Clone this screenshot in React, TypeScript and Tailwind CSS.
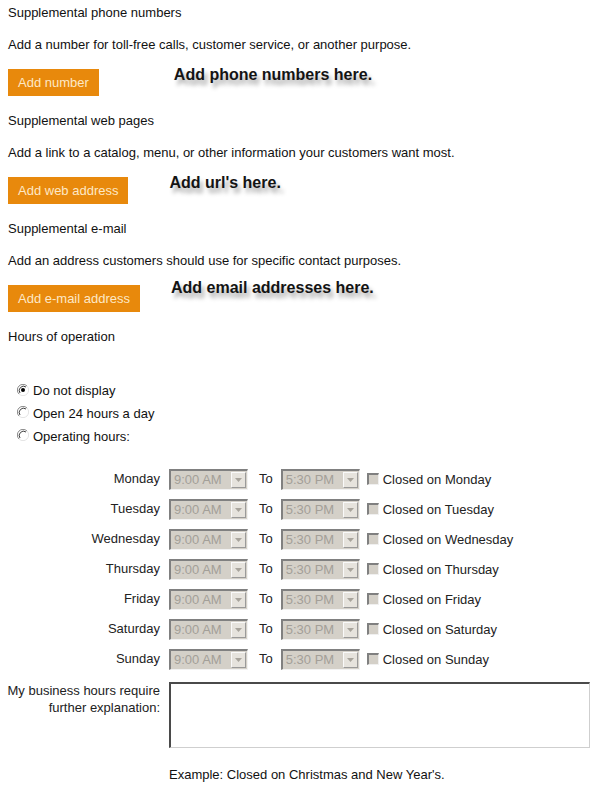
import React from "react";

const font = { fontFamily: '"Liberation Sans", Arial, sans-serif' };

const sections = [
  {
    title: "Supplemental phone numbers",
    desc: "Add a number for toll-free calls, customer service, or another purpose.",
    button: "Add number",
    note: "Add phone numbers here.",
    noteClass: "ml-[75px] -mt-[3px]",
  },
  {
    title: "Supplemental web pages",
    desc: "Add a link to a catalog, menu, or other information your customers want most.",
    button: "Add web address",
    note: "Add url's here.",
    noteClass: "ml-[41px] -mt-[3px]",
  },
  {
    title: "Supplemental e-mail",
    desc: "Add an address customers should use for specific contact purposes.",
    button: "Add e-mail address",
    note: "Add email addresses here.",
    noteClass: "ml-[31px] -mt-[6px]",
  },
];

const days = ["Monday", "Tuesday", "Wednesday", "Thursday", "Friday", "Saturday", "Sunday"];

function Radio({ checked }: { checked?: boolean }) {
  return (
    <svg width="12" height="12" viewBox="0 0 12 12" className="shrink-0 -mt-[3px]">
      <circle cx="6" cy="6" r="5.5" fill="#fff" />
      <path d="M10 2 A5.5 5.5 0 0 0 2 10" fill="none" stroke="#8a8a8a" strokeWidth="1" />
      <path d="M9 3 A4.3 4.3 0 0 0 3 9" fill="none" stroke="#404040" strokeWidth="1" />
      <path d="M2 10 A5.5 5.5 0 0 0 10 2" fill="none" stroke="#e4e4e4" strokeWidth="1" />
      {checked && <circle cx="6" cy="6" r="2" fill="#000" />}
    </svg>
  );
}

function TimeSelect({ value }: { value: string }) {
  return (
    <div className="flex h-[21px] w-[79px] items-stretch border-t-2 border-l-2 border-t-[#808080] border-l-[#808080] border-b border-r border-b-[#f2f2f2] border-r-[#f2f2f2] bg-[#d4d0c8]">
      <div className="flex flex-1 items-center pl-[3px] text-[13px] text-[#a39f98]">{value}</div>
      <div className="my-[1px] mr-[1px] flex w-[15px] items-center justify-center border-t border-l border-t-[#fafafa] border-l-[#fafafa] border-b border-r border-b-[#9a9a9a] border-r-[#9a9a9a] bg-[#e6e3dd]">
        <svg width="7" height="4" viewBox="0 0 7 4">
          <path d="M0 0 H7 L3.5 4 Z" fill="#a8a49c" />
        </svg>
      </div>
    </div>
  );
}

export default function App() {
  return (
    <div className="min-h-[797px] w-[601px] bg-white text-[13px] leading-[16px] text-[#111]" style={font}>
      <div className="pl-[8px] pt-[5px]">
        {sections.map((s) => (
          <div key={s.title} className="pb-[17px]">
            <div>{s.title}</div>
            <div className="mt-[16px]">{s.desc}</div>
            <div className="mt-[16px] flex items-start">
              <button className="h-[27px] bg-[#e8890c] px-[10px] text-[13px] text-[#fde8c6]">{s.button}</button>
              <div
                className={`text-[16px] font-bold leading-[18px] text-[#141414] [text-shadow:3px_5px_4px_rgba(0,0,0,0.35)] ${s.noteClass}`}
              >
                {s.note}
              </div>
            </div>
          </div>
        ))}
        <div>Hours of operation</div>
      </div>

      <div className="mt-[35px] pl-[17px]">
        <label className="flex h-[22px] items-center gap-[4px]">
          <Radio checked />
          <span>Do not display</span>
        </label>
        <label className="flex h-[23px] items-center gap-[4px]">
          <Radio />
          <span>Open 24 hours a day</span>
        </label>
        <label className="flex h-[23px] items-center gap-[4px]">
          <Radio />
          <span>Operating hours:</span>
        </label>
      </div>

      <div className="mt-[16px]">
        {days.map((d) => (
          <div key={d} className="flex h-[30px] items-center text-[#222]">
            <div className="w-[160px] text-right">{d}</div>
            <div className="ml-[9px]">
              <TimeSelect value="9:00 AM" />
            </div>
            <div className="ml-[11px]">To</div>
            <div className="ml-[8px]">
              <TimeSelect value="5:30 PM" />
            </div>
            <div className="ml-[7px] h-[12px] w-[12px] border-t-2 border-l-2 border-t-[#808080] border-l-[#808080] border-b border-r border-b-[#f0f0f0] border-r-[#f0f0f0] bg-[#d4d0c8]" />
            <div className="ml-[4px] mt-[2px]">Closed on {d}</div>
          </div>
        ))}
      </div>

      <div className="mt-[8px] flex items-start">
        <div className="w-[160px] text-right leading-[17px] text-[#222]">
          My business hours require
          <br />
          further explanation:
        </div>
        <textarea className="ml-[9px] h-[66px] w-[421px] resize-none border-t-2 border-l-2 border-t-[#4a4a4a] border-l-[#4a4a4a] border-b border-r border-b-[#cfcfcf] border-r-[#cfcfcf] bg-white outline-none" />
      </div>

      <div className="mt-[19px] pl-[169px]">Example: Closed on Christmas and New Year's.</div>
    </div>
  );
}
